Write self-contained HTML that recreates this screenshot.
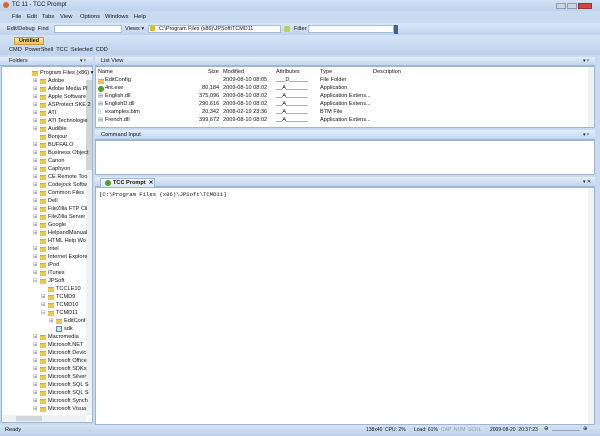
<!DOCTYPE html>
<html><head><style>
*{margin:0;padding:0;box-sizing:border-box}
body{width:600px;height:436px;overflow:hidden;background:#c9dbf1;font-family:"Liberation Sans",sans-serif;font-size:6px;color:#111;position:relative}
.a{position:absolute;white-space:nowrap}
.hdr{background:linear-gradient(#e3edf9,#c3d6ee);border-bottom:1px solid #9db5d6}
.t{position:absolute;white-space:nowrap;font-size:5.6px;line-height:8px}
.f{position:absolute;width:6px;height:5px;background:#ecc559;border-top:1px solid #d7a937}
</style></head><body>
<div class="a" style="left:0;top:0;width:600px;height:11px;background:linear-gradient(#d3e2f5,#bcd2ee)"></div>
<div class="a" style="left:3px;top:2px;width:6px;height:6px;border-radius:50%;background:#d9662a"></div>
<div class="a" style="left:12px;top:2px;font-size:6px">TC 11 - TCC Prompt</div>
<div class="a" style="left:556px;top:3px;width:10px;height:6px;background:#c9d6e6;border:1px solid #99a"></div>
<div class="a" style="left:567px;top:3px;width:10px;height:6px;background:#c9d6e6;border:1px solid #99a"></div>
<div class="a" style="left:578px;top:3px;width:14px;height:6px;background:#d2483a;border:1px solid #934"></div>
<div class="a" style="left:12px;top:14px;font-size:5.8px">File</div>
<div class="a" style="left:27px;top:14px;font-size:5.8px">Edit</div>
<div class="a" style="left:42px;top:14px;font-size:5.8px">Tabs</div>
<div class="a" style="left:60px;top:14px;font-size:5.8px">View</div>
<div class="a" style="left:80px;top:14px;font-size:5.8px">Options</div>
<div class="a" style="left:105px;top:14px;font-size:5.8px">Windows</div>
<div class="a" style="left:134px;top:14px;font-size:5.8px">Help</div>
<div class="a" style="left:0;top:23px;width:600px;height:12px;background:linear-gradient(#dbe7f7,#c0d4ee)"></div>
<div class="a" style="left:7px;top:26px;font-size:5.6px">Edit/Debug &nbsp;Find</div>
<div class="a" style="left:54px;top:25px;width:68px;height:8px;background:#fff;border:1px solid #a9bdd8"></div>
<div class="a" style="left:125px;top:26px;font-size:5.6px">Views ▾</div>
<div class="a" style="left:148px;top:25px;width:133px;height:8px;background:#fff;border:1px solid #a9bdd8"></div>
<div class="a" style="left:150px;top:26px;width:5px;height:5px;background:#e6b33c"></div>
<div class="a" style="left:159px;top:26px;font-size:5.4px">C:\Program Files (x86)\JPSoft\TCMD11</div>
<div class="a" style="left:284px;top:26px;width:6px;height:6px;background:#b8cf5c;border-radius:2px"></div>
<div class="a" style="left:294px;top:26px;font-size:5.6px">Filter</div>
<div class="a" style="left:308px;top:25px;width:86px;height:8px;background:#fff;border:1px solid #a9bdd8"></div>
<div class="a" style="left:394px;top:25px;width:4px;height:9px;background:#3e5f98"></div>
<div class="a" style="left:0;top:35px;width:600px;height:20px;background:linear-gradient(#d6e4f6,#bcd1ec)"></div>
<div class="a" style="left:14px;top:37px;width:30px;height:8px;background:linear-gradient(#fbe7a9,#f2c25a);border:1px solid #c99b3b;font-size:5.4px;font-weight:bold;text-align:center;line-height:7px">Untitled</div>
<div class="a" style="left:9px;top:47px;font-size:5.6px">CMD &nbsp;PowerShell &nbsp;TCC &nbsp;Selected &nbsp;CDD</div>
<div class="a hdr" style="left:0;top:57px;width:93px;height:9px"></div>
<div class="a" style="left:9px;top:58px;font-size:5.6px">Folders</div>
<div class="a" style="left:80px;top:58px;font-size:5px">▾ ᵖ</div>
<div class="a" style="left:1px;top:66px;width:92px;height:357px;background:#fff;border:1px solid #9db5d6"></div>
<div class="a" style="left:86px;top:67px;width:6px;height:348px;background:#eef1f5"></div>
<div class="a" style="left:86px;top:80px;width:6px;height:90px;background:#cfd5dd"></div>
<div class="a" style="left:2px;top:415px;width:84px;height:7px;background:#eef1f5"></div>
<div class="a" style="left:16px;top:416px;width:26px;height:5px;background:#cfd5dd"></div>

<div class="f" style="left:32px;top:71px"></div><div class="t" style="left:40px;top:69px">Program Files (x86) ▾</div>
<div class="t" style="left:33px;top:77px;color:#889">⊞</div><div class="f" style="left:40px;top:79px"></div><div class="t" style="left:48px;top:77px">Adobe</div>
<div class="t" style="left:33px;top:85px;color:#889">⊞</div><div class="f" style="left:40px;top:87px"></div><div class="t" style="left:48px;top:85px">Adobe Media Pl</div>
<div class="t" style="left:33px;top:93px;color:#889">⊞</div><div class="f" style="left:40px;top:95px"></div><div class="t" style="left:48px;top:93px">Apple Software</div>
<div class="t" style="left:33px;top:101px;color:#889">⊞</div><div class="f" style="left:40px;top:103px"></div><div class="t" style="left:48px;top:101px">ASProtect SKE 2</div>
<div class="t" style="left:33px;top:109px;color:#889">⊞</div><div class="f" style="left:40px;top:111px"></div><div class="t" style="left:48px;top:109px">ATI</div>
<div class="t" style="left:33px;top:117px;color:#889">⊞</div><div class="f" style="left:40px;top:119px"></div><div class="t" style="left:48px;top:117px">ATI Technologie</div>
<div class="t" style="left:33px;top:125px;color:#889">⊞</div><div class="f" style="left:40px;top:127px"></div><div class="t" style="left:48px;top:125px">Audible</div>
<div class="f" style="left:40px;top:135px"></div><div class="t" style="left:48px;top:133px">Bonjour</div>
<div class="t" style="left:33px;top:141px;color:#889">⊞</div><div class="f" style="left:40px;top:143px"></div><div class="t" style="left:48px;top:141px">BUFFALO</div>
<div class="t" style="left:33px;top:149px;color:#889">⊞</div><div class="f" style="left:40px;top:151px"></div><div class="t" style="left:48px;top:149px">Business Object</div>
<div class="t" style="left:33px;top:157px;color:#889">⊞</div><div class="f" style="left:40px;top:159px"></div><div class="t" style="left:48px;top:157px">Canon</div>
<div class="t" style="left:33px;top:165px;color:#889">⊞</div><div class="f" style="left:40px;top:167px"></div><div class="t" style="left:48px;top:165px">Caphyon</div>
<div class="t" style="left:33px;top:173px;color:#889">⊞</div><div class="f" style="left:40px;top:175px"></div><div class="t" style="left:48px;top:173px">CE Remote Too</div>
<div class="t" style="left:33px;top:181px;color:#889">⊞</div><div class="f" style="left:40px;top:183px"></div><div class="t" style="left:48px;top:181px">Codejock Softw</div>
<div class="t" style="left:33px;top:189px;color:#889">⊞</div><div class="f" style="left:40px;top:191px"></div><div class="t" style="left:48px;top:189px">Common Files</div>
<div class="t" style="left:33px;top:197px;color:#889">⊞</div><div class="f" style="left:40px;top:199px"></div><div class="t" style="left:48px;top:197px">Dell</div>
<div class="t" style="left:33px;top:205px;color:#889">⊞</div><div class="f" style="left:40px;top:207px"></div><div class="t" style="left:48px;top:205px">FileZilla FTP Cli</div>
<div class="t" style="left:33px;top:213px;color:#889">⊞</div><div class="f" style="left:40px;top:215px"></div><div class="t" style="left:48px;top:213px">FileZilla Server</div>
<div class="t" style="left:33px;top:221px;color:#889">⊞</div><div class="f" style="left:40px;top:223px"></div><div class="t" style="left:48px;top:221px">Google</div>
<div class="t" style="left:33px;top:229px;color:#889">⊞</div><div class="f" style="left:40px;top:231px"></div><div class="t" style="left:48px;top:229px">HelpandManual</div>
<div class="f" style="left:40px;top:239px"></div><div class="t" style="left:48px;top:237px">HTML Help Wo</div>
<div class="t" style="left:33px;top:245px;color:#889">⊞</div><div class="f" style="left:40px;top:247px"></div><div class="t" style="left:48px;top:245px">Intel</div>
<div class="t" style="left:33px;top:253px;color:#889">⊞</div><div class="f" style="left:40px;top:255px"></div><div class="t" style="left:48px;top:253px">Internet Explore</div>
<div class="t" style="left:33px;top:261px;color:#889">⊞</div><div class="f" style="left:40px;top:263px"></div><div class="t" style="left:48px;top:261px">iPod</div>
<div class="t" style="left:33px;top:269px;color:#889">⊞</div><div class="f" style="left:40px;top:271px"></div><div class="t" style="left:48px;top:269px">iTunes</div>
<div class="t" style="left:33px;top:277px;color:#889">⊟</div><div class="f" style="left:40px;top:279px"></div><div class="t" style="left:48px;top:277px">JPSoft</div>
<div class="f" style="left:48px;top:287px"></div><div class="t" style="left:56px;top:285px">TCCLE10</div>
<div class="t" style="left:41px;top:293px;color:#889">⊞</div><div class="f" style="left:48px;top:295px"></div><div class="t" style="left:56px;top:293px">TCMD9</div>
<div class="t" style="left:41px;top:301px;color:#889">⊞</div><div class="f" style="left:48px;top:303px"></div><div class="t" style="left:56px;top:301px">TCMD10</div>
<div class="t" style="left:41px;top:309px;color:#889">⊟</div><div class="f" style="left:48px;top:311px"></div><div class="t" style="left:56px;top:309px">TCMD11</div>
<div class="t" style="left:49px;top:317px;color:#889">⊞</div><div class="f" style="left:56px;top:319px"></div><div class="t" style="left:64px;top:317px">EditConf</div>
<div class="a" style="left:56px;top:326px;width:6px;height:6px;border:1px solid #5a7fb0;background:#dde9f6"></div><div class="t" style="left:64px;top:325px">sdk</div>
<div class="t" style="left:33px;top:333px;color:#889">⊞</div><div class="f" style="left:40px;top:335px"></div><div class="t" style="left:48px;top:333px">Macromedia</div>
<div class="t" style="left:33px;top:341px;color:#889">⊞</div><div class="f" style="left:40px;top:343px"></div><div class="t" style="left:48px;top:341px">Microsoft.NET</div>
<div class="t" style="left:33px;top:349px;color:#889">⊞</div><div class="f" style="left:40px;top:351px"></div><div class="t" style="left:48px;top:349px">Microsoft Devic</div>
<div class="t" style="left:33px;top:357px;color:#889">⊞</div><div class="f" style="left:40px;top:359px"></div><div class="t" style="left:48px;top:357px">Microsoft Office</div>
<div class="t" style="left:33px;top:365px;color:#889">⊞</div><div class="f" style="left:40px;top:367px"></div><div class="t" style="left:48px;top:365px">Microsoft SDKs</div>
<div class="t" style="left:33px;top:373px;color:#889">⊞</div><div class="f" style="left:40px;top:375px"></div><div class="t" style="left:48px;top:373px">Microsoft Silver</div>
<div class="t" style="left:33px;top:381px;color:#889">⊞</div><div class="f" style="left:40px;top:383px"></div><div class="t" style="left:48px;top:381px">Microsoft SQL S</div>
<div class="t" style="left:33px;top:389px;color:#889">⊞</div><div class="f" style="left:40px;top:391px"></div><div class="t" style="left:48px;top:389px">Microsoft SQL S</div>
<div class="t" style="left:33px;top:397px;color:#889">⊞</div><div class="f" style="left:40px;top:399px"></div><div class="t" style="left:48px;top:397px">Microsoft Synch</div>
<div class="t" style="left:33px;top:405px;color:#889">⊞</div><div class="f" style="left:40px;top:407px"></div><div class="t" style="left:48px;top:405px">Microsoft Visua</div>

<div class="a hdr" style="left:95px;top:57px;width:500px;height:9px"></div>
<div class="a" style="left:101px;top:58px;font-size:5.6px">List View</div>
<div class="a" style="left:583px;top:58px;font-size:5px">▾ ᵖ</div>
<div class="a" style="left:95px;top:66px;width:500px;height:62px;background:#fff;border:1px solid #9db5d6"></div>
<div class="a" style="left:588px;top:67px;width:6px;height:60px;background:#eef1f5"></div>
<div class="t" style="left:98px;top:68px">Name</div><div class="t" style="left:208px;top:68px">Size</div><div class="t" style="left:223px;top:68px">Modified</div><div class="t" style="left:276px;top:68px">Attributes</div><div class="t" style="left:320px;top:68px">Type</div><div class="t" style="left:373px;top:68px">Description</div>
<div class="f" style="left:98px;top:79px"></div><div class="t" style="left:105px;top:76px">EditConfig</div><div class="t" style="left:223px;top:76px">2009-08-10 08:05</div><div class="t" style="left:276px;top:76px">___D______</div><div class="t" style="left:320px;top:76px">File Folder</div>
<div class="a" style="left:98px;top:86px;width:6px;height:6px;border-radius:50%;background:#5a9a2a"></div><div class="t" style="left:105px;top:84px">4nt.exe</div><div class="t" style="left:202px;top:84px">80,184</div><div class="t" style="left:223px;top:84px">2009-08-10 08:02</div><div class="t" style="left:276px;top:84px">__A_______</div><div class="t" style="left:320px;top:84px">Application</div>
<div class="t" style="left:98px;top:92px;color:#779">▤</div><div class="t" style="left:105px;top:92px">English.dll</div><div class="t" style="left:199px;top:92px">375,096</div><div class="t" style="left:223px;top:92px">2009-08-10 08:02</div><div class="t" style="left:276px;top:92px">__A_______</div><div class="t" style="left:320px;top:92px">Application Extens...</div>
<div class="t" style="left:98px;top:100px;color:#779">▤</div><div class="t" style="left:105px;top:100px">EnglishD.dll</div><div class="t" style="left:199px;top:100px">290,616</div><div class="t" style="left:223px;top:100px">2009-08-10 08:02</div><div class="t" style="left:276px;top:100px">__A_______</div><div class="t" style="left:320px;top:100px">Application Extens...</div>
<div class="t" style="left:98px;top:108px;color:#779">▯</div><div class="t" style="left:105px;top:108px">examples.btm</div><div class="t" style="left:202px;top:108px">20,342</div><div class="t" style="left:223px;top:108px">2008-02-19 23:36</div><div class="t" style="left:276px;top:108px">__A_______</div><div class="t" style="left:320px;top:108px">BTM File</div>
<div class="t" style="left:98px;top:116px;color:#779">▤</div><div class="t" style="left:105px;top:116px">French.dll</div><div class="t" style="left:199px;top:116px">399,672</div><div class="t" style="left:223px;top:116px">2009-08-10 08:02</div><div class="t" style="left:276px;top:116px">__A_______</div><div class="t" style="left:320px;top:116px">Application Extens...</div>
<div class="a hdr" style="left:95px;top:130px;width:500px;height:10px"></div>
<div class="a" style="left:101px;top:132px;font-size:5.6px">Command Input</div>
<div class="a" style="left:583px;top:132px;font-size:5px">▾ ᵖ</div>
<div class="a" style="left:95px;top:140px;width:500px;height:35px;background:#fff;border:1px solid #9db5d6"></div>
<div class="a hdr" style="left:95px;top:177px;width:500px;height:10px"></div>
<div class="a" style="left:100px;top:178px;width:55px;height:10px;background:linear-gradient(#f4f8fd,#dbe6f4);border:1px solid #9db5d6;border-bottom:none"></div>
<div class="a" style="left:105px;top:180px;width:6px;height:6px;border-radius:50%;background:#5a9a2a"></div>
<div class="a" style="left:113px;top:180px;font-size:5.6px;font-weight:bold">TCC Prompt &nbsp;✕</div>
<div class="a" style="left:583px;top:179px;font-size:5px">▾ ✕</div>
<div class="a" style="left:95px;top:187px;width:500px;height:238px;background:#fff;border:1px solid #9db5d6"></div>
<div class="a" style="left:588px;top:188px;width:6px;height:236px;background:#f1f3f6"></div>
<div class="a" style="left:99px;top:191px;font-family:'Liberation Mono',monospace;font-size:5.6px">[C:\Program Files (x86)\JPSoft\TCMD11]</div>
<div class="a" style="left:0;top:425px;width:600px;height:11px;background:linear-gradient(#d6e3f4,#bcd0ea)"></div>
<div class="a" style="left:5px;top:427px;font-size:5.6px">Ready</div>
<div class="a" style="left:366px;top:427px;font-size:5px">138x40</div>
<div class="a" style="left:385px;top:427px;font-size:5px">CPU: 2%</div>
<div class="a" style="left:414px;top:427px;font-size:5px">Load: 61%</div>
<div class="a" style="left:441px;top:427px;font-size:5px;color:#99a">CAP &nbsp;NUM &nbsp;SCRL</div>
<div class="a" style="left:490px;top:427px;font-size:5px">2009-08-20 &nbsp;20:37:23</div>
<div class="a" style="left:544px;top:426px;font-size:5.5px">⊖</div>
<div class="a" style="left:552px;top:430px;width:28px;height:1px;background:#9ab"></div>
<div class="a" style="left:583px;top:426px;font-size:5.5px">⊕</div>
</body></html>
